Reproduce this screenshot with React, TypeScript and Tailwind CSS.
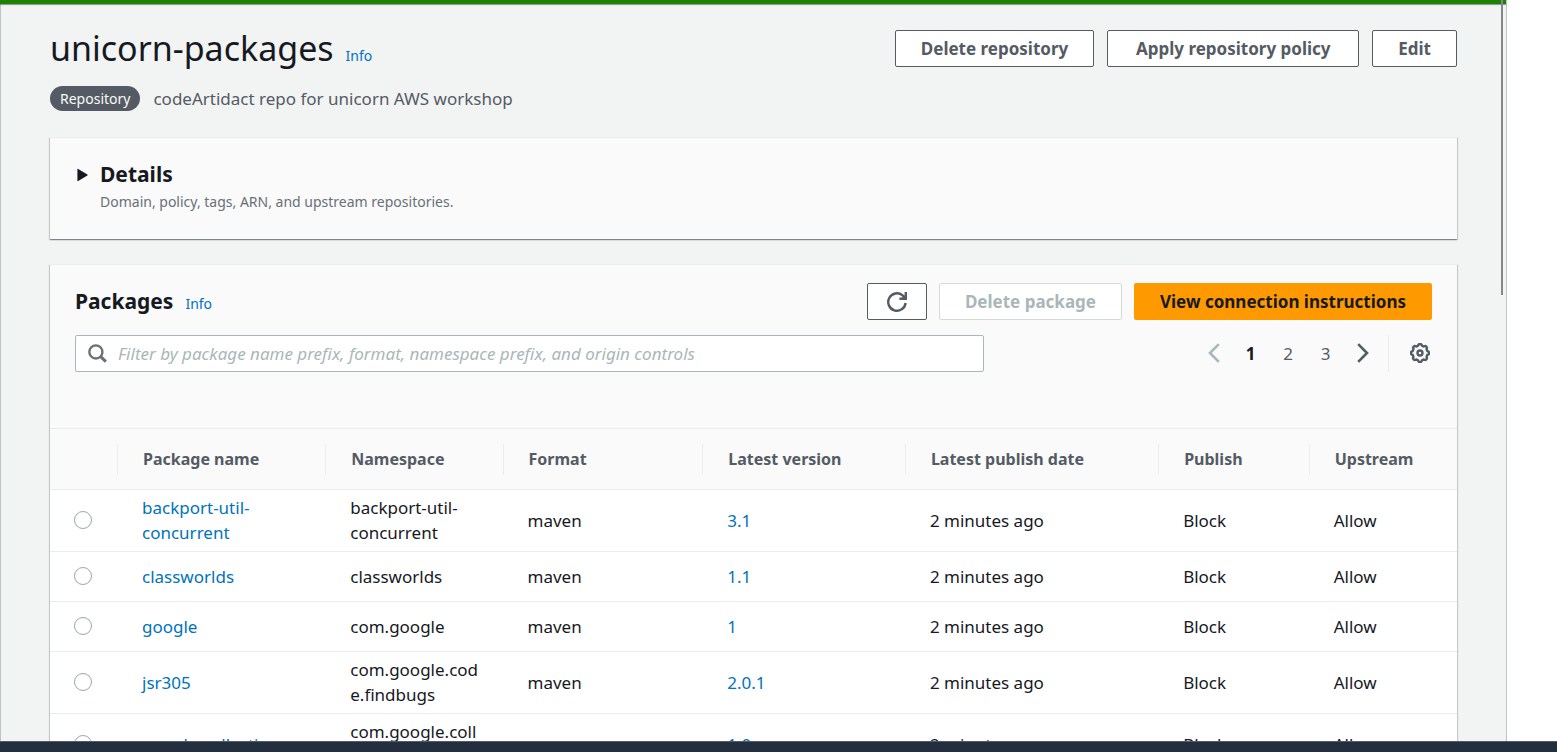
import React from "react";

type Pkg = { name: string; namespace: string; version: string };

const packages: Pkg[] = [
  { name: "backport-util-concurrent", namespace: "backport-util-concurrent", version: "3.1" },
  { name: "classworlds", namespace: "classworlds", version: "1.1" },
  { name: "google", namespace: "com.google", version: "1" },
  { name: "jsr305", namespace: "com.google.code.findbugs", version: "2.0.1" },
  { name: "google-collections", namespace: "com.google.collections", version: "1.0" },
];

const columns = [
  "Package name",
  "Namespace",
  "Format",
  "Latest version",
  "Latest publish date",
  "Publish",
  "Upstream",
];

const button =
  "flex h-[37px] items-center justify-center rounded-[2px] border px-[25px] text-[17px] font-bold whitespace-nowrap";
const card =
  "border-t border-[#eaeded] bg-[#fafafa] shadow-[0_1px_1px_0_rgba(0,28,36,0.3),1px_1px_1px_0_rgba(0,28,36,0.15),-1px_1px_1px_0_rgba(0,28,36,0.15)]";
const cell = "h-[50px] border-b border-[#eaeded] pt-[5px] pb-[6px] pl-[25px] pr-[22px] wrap-anywhere";

function RefreshIcon() {
  return (
    <svg width="20" height="20" viewBox="0 0 20 20" fill="none" stroke="#545b64" strokeWidth="2.4" aria-hidden="true">
      <path d="M18.6 11A8.7 8.7 0 1 1 15.6 3.4L17.6 5.6" />
      <path d="M18.8 0V6.7H12.4" />
      <path d="M14.5 6.5L18.6 2.4V6.5Z" fill="#545b64" stroke="none" />
    </svg>
  );
}

function SearchIcon() {
  return (
    <svg width="19" height="19" viewBox="0 0 20 20" fill="none" stroke="#687078" strokeWidth="2.5" aria-hidden="true">
      <circle cx="8.3" cy="8.3" r="6.9" />
      <path d="M13.1 13.1L18.8 18.6" strokeWidth="3.2" />
    </svg>
  );
}

function Chevron({ left }: { left?: boolean }) {
  return (
    <svg width="14" height="20" viewBox="0 0 14 20" fill="none" stroke="currentColor" strokeWidth="2.6" aria-hidden="true">
      <path d={left ? "M11.8 1.2L3 10L11.8 18.8" : "M2.2 1.2L11 10L2.2 18.8"} />
    </svg>
  );
}

function GearIcon() {
  const lobes = 8;
  const points = Array.from({ length: 96 }, (_, i) => {
    const a = (i / 96) * Math.PI * 2;
    const r = 8.2 + 0.75 * Math.tanh(2.2 * Math.cos(lobes * a));
    return `${(10 + r * Math.sin(a)).toFixed(2)} ${(10 - r * Math.cos(a)).toFixed(2)}`;
  });
  return (
    <svg width="20" height="20" viewBox="0 0 20 20" fill="none" stroke="#545b64" strokeWidth="2.4" aria-hidden="true">
      <path d={`M${points.join("L")}Z`} />
      <circle cx="10" cy="10" r="2.5" />
    </svg>
  );
}

export default function App() {
  return (
    <div className="flex h-screen flex-col overflow-hidden bg-white font-['Noto_Sans','Open_Sans',sans-serif] text-[17px] leading-[25px] text-[#16191f]">
      <div className="relative mr-[50px] flex min-h-0 flex-1 flex-col overflow-hidden border-r border-[#bcc4c5] bg-[#f2f3f3]">
        <div className="z-10 h-1 shrink-0 bg-[#1d8102] shadow-[0_1px_1px_0_rgba(0,28,36,0.45)]" />
        <div className="absolute top-0 right-[3px] z-20 h-[295px] w-[2px] bg-[#868888]" />
        <main className="min-h-0 flex-1 overflow-hidden border-l border-[#bcc4c5] pt-[26px] pr-[49px] pl-[49px]">
          <header className="flex items-start justify-between">
            <div className="flex items-baseline gap-3">
              <h1 className="text-[34px] leading-[37px]">unicorn-packages</h1>
              <a href="#info" className="text-[14px] text-[#0073bb]">Info</a>
            </div>
            <div className="flex gap-[13px]">
              <button className={`${button} border-[#545b64] bg-white text-[#545b64]`}>Delete repository</button>
              <button className={`${button} min-w-[252px] border-[#545b64] bg-white text-[#545b64]`}>Apply repository policy</button>
              <button className={`${button} border-[#545b64] bg-white text-[#545b64]`}>Edit</button>
            </div>
          </header>
          <div className="mt-[18px] flex items-center gap-[13px]">
            <span className="rounded-full bg-[#545b64] px-[10px] text-[14px] text-[#fafafa]">Repository</span>
            <p className="text-[#545b64]">codeArtidact repo for unicorn AWS workshop</p>
          </div>

          <section className={`${card} mt-[26px] h-[102px] px-[27px] pt-[23px]`}>
            <button className="flex items-center gap-3 text-left" aria-expanded="false">
              <svg width="11" height="14" viewBox="0 0 11 14" fill="#16191f" aria-hidden="true">
                <path d="M1 0.8Q0.4 0.6 0.4 1.4V12.6Q0.4 13.4 1.2 13L10.4 7.6Q11 7 10.4 6.4L1.2 1Z" />
              </svg>
              <h2 className="text-[21px] leading-[27px] font-bold">Details</h2>
            </button>
            <p className="ml-[23px] text-[14px] leading-[27px] text-[#687078]">
              Domain, policy, tags, ARN, and upstream repositories.
            </p>
          </section>

          <section className={`${card} mt-[25px]`}>
            <div className="flex h-[163px] flex-col gap-[15px] px-[25px] pt-[18px]">
              <div className="flex items-center justify-between">
                <div className="flex items-baseline gap-3">
                  <h2 className="text-[21px] leading-[27px] font-bold">Packages</h2>
                  <a href="#packages-info" className="text-[14px] text-[#0073bb]">Info</a>
                </div>
                <div className="flex gap-3">
                  <button aria-label="Refresh" className="flex h-[37px] w-[60px] items-center justify-center rounded-[2px] border border-[#545b64] bg-white">
                    <RefreshIcon />
                  </button>
                  <button disabled className={`${button} border-[#d5dbdb] bg-white text-[#aab7b8]`}>Delete package</button>
                  <button className={`${button} border-[#ff9900] bg-[#ff9900] text-[#16191f]`}>View connection instructions</button>
                </div>
              </div>
              <div className="flex items-center justify-between">
                <label className="flex h-[37px] w-[67%] items-center gap-[11px] rounded-[2px] border border-[#aab7b8] bg-white px-3 pb-px">
                  <SearchIcon />
                  <input
                    type="text"
                    aria-label="Filter packages"
                    placeholder="Filter by package name prefix, format, namespace prefix, and origin controls"
                    className="min-w-0 flex-1 bg-transparent outline-none placeholder:text-[#aab7b8] placeholder:italic"
                  />
                </label>
                <div className="flex h-[37px] items-center text-[#545b64]">
                  <nav aria-label="Pagination" className="flex items-center pb-px">
                    <button aria-label="Previous page" disabled className="flex w-[37px] items-center justify-center text-[#aab7b8]"><Chevron left /></button>
                    <button className="w-[37px] font-bold text-[#16191f]">1</button>
                    <button className="w-[38px]">2</button>
                    <button className="w-[37px]">3</button>
                    <button aria-label="Next page" className="flex w-[37px] items-center justify-center"><Chevron /></button>
                  </nav>
                  <span className="ml-[7px] h-[37px] border-l border-[#eaeded]" />
                  <button aria-label="Preferences" className="mr-[2px] ml-[21px] pb-px"><GearIcon /></button>
                </div>
              </div>
            </div>
            <table className="w-full table-fixed border-separate border-spacing-0 border-t border-[#eaeded] text-left">
              <colgroup>
                <col className="w-[67px]" />
                <col className="w-[14.8%]" />
                <col className="w-[12.6%]" />
                <col className="w-[14.2%]" />
                <col className="w-[14.4%]" />
                <col className="w-[18%]" />
                <col className="w-[10.7%]" />
                <col />
              </colgroup>
              <thead>
                <tr>
                  <th scope="col" aria-label="Select" className="border-b border-[#eaeded]" />
                  {columns.map((c) => (
                    <th key={c} scope="col" className="h-[61px] border-b border-[#eaeded] p-0 text-[16px] font-bold whitespace-nowrap text-[#545b64]">
                      <div className="flex h-[31px] items-center border-l border-[#eaeded] pl-[25px]">{c}</div>
                    </th>
                  ))}
                </tr>
              </thead>
              <tbody className="bg-white">
                {packages.map((p) => (
                  <tr key={p.name}>
                    <td className="border-b border-[#eaeded] pb-[2px] pl-6">
                      <input
                        type="radio"
                        name="package"
                        aria-label={`Select ${p.name}`}
                        className="block size-[18px] appearance-none rounded-full border border-[#9aa7a8] bg-white"
                      />
                    </td>
                    <td className={cell}><a href={`#${p.name}`} className="text-[#0073bb]">{p.name}</a></td>
                    <td className={cell}>{p.namespace}</td>
                    <td className={cell}>maven</td>
                    <td className={cell}><a href={`#${p.name}-${p.version}`} className="text-[#0073bb]">{p.version}</a></td>
                    <td className={cell}>2 minutes ago</td>
                    <td className={cell}>Block</td>
                    <td className={cell}>Allow</td>
                  </tr>
                ))}
              </tbody>
            </table>
          </section>
        </main>
      </div>
      <footer className="h-[11px] shrink-0 border-t border-[#545b64] bg-[#232f3e]" />
    </div>
  );
}
